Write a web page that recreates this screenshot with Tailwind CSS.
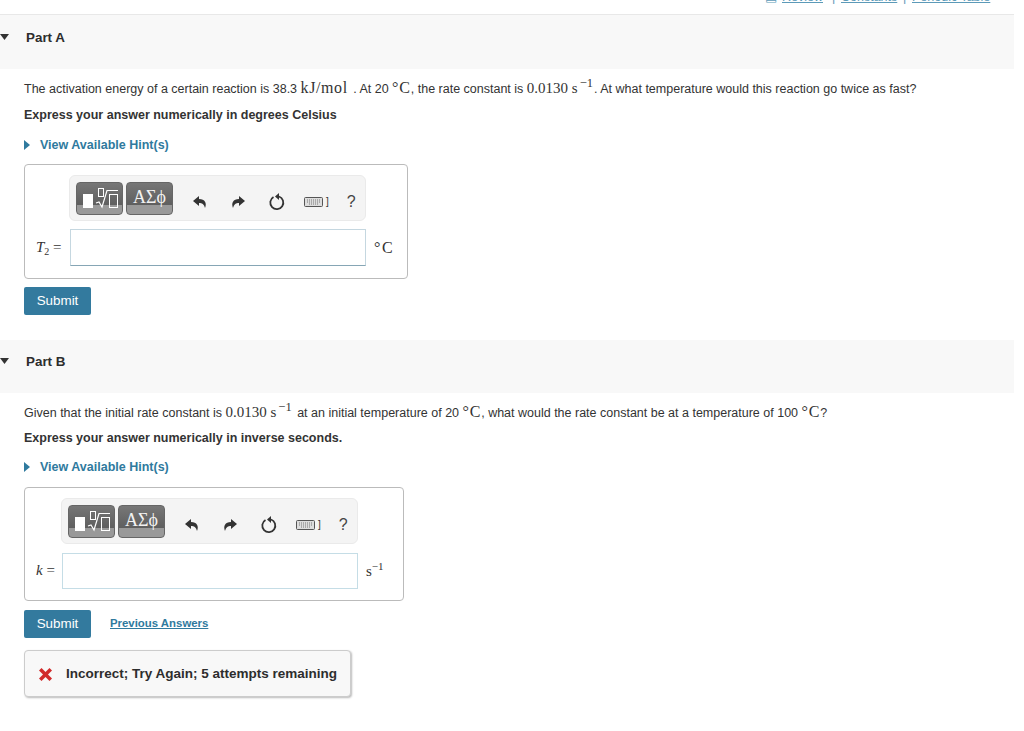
<!DOCTYPE html>
<html lang="en">
<head>
    <meta charset="UTF-8">
    <title>Part A / Part B</title>
    <script src="https://cdn.jsdelivr.net/npm/@tailwindcss/browser@4"></script>
</head>
<body class="bg-white text-[#333] font-['Liberation_Sans',Arial,sans-serif] text-[12.5px] h-[731px] overflow-hidden">
    <div class="w-[1014px]">
        <!-- top links, cut off by the window -->
        <div class="h-[14px] overflow-hidden flex justify-end pr-[24px] text-[12.5px] leading-[14px]">
            <div class="-mt-[10px] flex text-[#5c9ab8]">
                <a class="underline w-[17px]">▤</a>
                <a class="underline w-[44px]">Review</a>
                <span class="w-[15px] text-center">|</span>
                <a class="underline w-[56px]">Constants</a>
                <span class="w-[15px] text-center">|</span>
                <a class="underline w-[78px] whitespace-nowrap">Periodic Table</a>
            </div>
        </div>

        <!-- Part A -->
        <div class="h-[55px] bg-[#f8f8f8] border-t border-[#e8e8e8] flex items-start pt-[15px]">
            <svg class="w-[9px] h-[6px] mt-[4px]" viewBox="0 0 9 6"><path d="M0 0H9L4.5 6Z" fill="#333"/></svg>
            <span class="ml-[17px] font-bold text-[13.4px] leading-[16px] text-[#2d2d2d]">Part A</span>
        </div>
        <div class="pl-[24px]">
            <p class="mt-[10px] h-[18px] leading-[18px] whitespace-nowrap">The activation energy of a certain reaction is 38.3 <span class="font-['Liberation_Serif',serif] text-[16px] tracking-[0.6px] mr-[2px]">kJ/mol</span> . At 20 <span class="font-['Liberation_Serif',serif] text-[16px] tracking-[0.8px]">°C</span>, the rate constant is <span class="font-['Liberation_Serif',serif] text-[15px]">0.0130 s<sup class="text-[12.5px] ml-[2px] mr-[1px]">−1</sup></span>. At what temperature would this reaction go twice as fast?</p>
            <p class="mt-[10px] h-[16px] leading-[16px] font-bold">Express your answer numerically in degrees Celsius</p>
            <div class="mt-[14px] h-[16px] flex items-center gap-[10px] font-bold text-[#2f7a9e]">
                <svg class="w-[6px] h-[10px]" viewBox="0 0 6 10"><path d="M0 0L6 5L0 10Z" fill="#2f7a9e"/></svg>
                <span>View Available Hint(s)</span>
            </div>

            <div class="mt-[11px] w-[384px] h-[115px] border border-[#bbb] rounded-[4px] pt-[10px]">
                <div class="ml-[44px] w-[297px] h-[46px] bg-[#f4f4f4] border border-[#eaeaea] rounded-[6px] flex items-center pl-[6px]">
                    <div class="w-[47px] h-[33px] rounded-[4px] border border-[#666] bg-[linear-gradient(#777,#5f5f5f_70%,#999_70%)]">
                        <svg class="w-[45px] h-[31px]" viewBox="0 0 45 31" fill="none"><rect x="6" y="11" width="10" height="14" fill="#fff"/><rect x="21.5" y="5.5" width="5" height="8" stroke="#fff"/><path d="M19 20L22 19L25 24L30 7.5H41" stroke="#fff" stroke-width="1.2"/><rect x="32.5" y="11.5" width="8" height="13" stroke="#fff"/></svg>
                    </div>
                    <div class="ml-[3px] w-[47px] h-[33px] rounded-[4px] border border-[#666] bg-[linear-gradient(#777,#5f5f5f_70%,#999_70%)] text-[#f2f2f2] font-['Liberation_Serif','DejaVu_Serif',serif] text-[18px] leading-[28px] text-center">ΑΣϕ</div>
                    <div class="ml-[20px] pt-[8px] flex items-center text-[#333]">
                        <svg class="w-[14px] h-[14px]" viewBox="0 0 14 14"><path d="M6 1L0 6L6 11V8C9 8 11 9 12 13C14 8 12 4 6 4Z" fill="#333"/></svg>
                        <svg class="ml-[24px] w-[14px] h-[14px]" viewBox="0 0 14 14"><path d="M8 1L14 6L8 11V8C5 8 3 9 2 13C0 8 2 4 8 4Z" fill="#333"/></svg>
                        <svg class="ml-[23px] w-[18px] h-[18px]" viewBox="0 0 18 18" fill="none"><path d="M11 3.5A6.5 6.5 0 1 1 5.5 4" stroke="#333" stroke-width="1.8"/><path d="M10 0V7L6 3.5Z" fill="#333" transform="translate(1 0)"/></svg>
                        <svg class="ml-[18px] w-[19px] h-[10px]" viewBox="0 0 19 10" fill="none"><rect x="0.5" y="0.5" width="18" height="9" rx="1" fill="#ddd" stroke="#555"/><path d="M3 3H16M3 5H16M5 7H14" stroke="#777" stroke-dasharray="1 1"/></svg>
                        <span class="ml-[3px] text-[10px] leading-[10px]">]</span>
                        <span class="ml-[18px] text-[16px] leading-[16px] text-[#444]">?</span>
                    </div>
                </div>
                <div class="mt-[8px] flex items-center h-[37px]">
                    <span class="w-[45px] pl-[11px] font-['Liberation_Serif',serif] text-[15px] whitespace-nowrap"><i>T</i><sub class="text-[10px]">2</sub> =</span>
                    <div class="w-[296px] h-[37px] bg-white border border-[#c5d7e0] border-b-[#86a6b5]"></div>
                    <span class="ml-[8px] font-['Liberation_Serif',serif] text-[16px] tracking-[1.5px]">°C</span>
                </div>
            </div>

            <button class="mt-[8px] block w-[67px] h-[28px] bg-[#337a9e] rounded-[2px] text-white text-[13.4px]">Submit</button>
        </div>

        <!-- Part B -->
        <div class="mt-[25px] h-[53px] bg-[#f8f8f8] flex items-start pt-[14px]">
            <svg class="w-[9px] h-[6px] mt-[4px]" viewBox="0 0 9 6"><path d="M0 0H9L4.5 6Z" fill="#333"/></svg>
            <span class="ml-[17px] font-bold text-[13.4px] leading-[16px] text-[#2d2d2d]">Part B</span>
        </div>
        <div class="pl-[24px]">
            <p class="mt-[10px] h-[18px] leading-[18px] whitespace-nowrap">Given that the initial rate constant is <span class="font-['Liberation_Serif',serif] text-[15px]">0.0130 s<sup class="text-[12.5px] ml-[2px] mr-[2px]">−1</sup></span> at an initial temperature of 20 <span class="font-['Liberation_Serif',serif] text-[16px] tracking-[0.8px]">°C</span>, what would the rate constant be at a temperature of 100 <span class="font-['Liberation_Serif',serif] text-[16px] tracking-[0.8px]">°C</span>?</p>
            <p class="mt-[9px] h-[16px] leading-[16px] font-bold">Express your answer numerically in inverse seconds.</p>
            <div class="mt-[13px] h-[16px] flex items-center gap-[10px] font-bold text-[#2f7a9e]">
                <svg class="w-[6px] h-[10px]" viewBox="0 0 6 10"><path d="M0 0L6 5L0 10Z" fill="#2f7a9e"/></svg>
                <span>View Available Hint(s)</span>
            </div>

            <div class="mt-[12px] w-[380px] h-[114px] border border-[#bbb] rounded-[4px] pt-[10px]">
                <div class="ml-[36px] w-[297px] h-[46px] bg-[#f4f4f4] border border-[#eaeaea] rounded-[6px] flex items-center pl-[6px]">
                    <div class="w-[47px] h-[33px] rounded-[4px] border border-[#666] bg-[linear-gradient(#777,#5f5f5f_70%,#999_70%)]">
                        <svg class="w-[45px] h-[31px]" viewBox="0 0 45 31" fill="none"><rect x="6" y="11" width="10" height="14" fill="#fff"/><rect x="21.5" y="5.5" width="5" height="8" stroke="#fff"/><path d="M19 20L22 19L25 24L30 7.5H41" stroke="#fff" stroke-width="1.2"/><rect x="32.5" y="11.5" width="8" height="13" stroke="#fff"/></svg>
                    </div>
                    <div class="ml-[3px] w-[47px] h-[33px] rounded-[4px] border border-[#666] bg-[linear-gradient(#777,#5f5f5f_70%,#999_70%)] text-[#f2f2f2] font-['Liberation_Serif','DejaVu_Serif',serif] text-[18px] leading-[28px] text-center">ΑΣϕ</div>
                    <div class="ml-[20px] pt-[8px] flex items-center text-[#333]">
                        <svg class="w-[14px] h-[14px]" viewBox="0 0 14 14"><path d="M6 1L0 6L6 11V8C9 8 11 9 12 13C14 8 12 4 6 4Z" fill="#333"/></svg>
                        <svg class="ml-[24px] w-[14px] h-[14px]" viewBox="0 0 14 14"><path d="M8 1L14 6L8 11V8C5 8 3 9 2 13C0 8 2 4 8 4Z" fill="#333"/></svg>
                        <svg class="ml-[23px] w-[18px] h-[18px]" viewBox="0 0 18 18" fill="none"><path d="M11 3.5A6.5 6.5 0 1 1 5.5 4" stroke="#333" stroke-width="1.8"/><path d="M10 0V7L6 3.5Z" fill="#333" transform="translate(1 0)"/></svg>
                        <svg class="ml-[18px] w-[19px] h-[10px]" viewBox="0 0 19 10" fill="none"><rect x="0.5" y="0.5" width="18" height="9" rx="1" fill="#ddd" stroke="#555"/><path d="M3 3H16M3 5H16M5 7H14" stroke="#777" stroke-dasharray="1 1"/></svg>
                        <span class="ml-[3px] text-[10px] leading-[10px]">]</span>
                        <span class="ml-[18px] text-[16px] leading-[16px] text-[#444]">?</span>
                    </div>
                </div>
                <div class="mt-[9px] flex items-center h-[36px]">
                    <span class="w-[37px] pl-[11px] mb-[2px] font-['Liberation_Serif',serif] text-[15px] whitespace-nowrap"><i>k</i> =</span>
                    <div class="w-[296px] h-[36px] bg-white border border-[#c5dde6]"></div>
                    <span class="ml-[8px] font-['Liberation_Serif',serif] text-[15px]">s<sup class="text-[11px]">−1</sup></span>
                </div>
            </div>

            <div class="mt-[9px] flex items-center">
                <button class="w-[67px] h-[28px] bg-[#337a9e] rounded-[2px] text-white text-[13.4px]">Submit</button>
                <a class="ml-[19px] underline font-bold text-[11.4px] text-[#2f7a9e]">Previous Answers</a>
            </div>

            <div class="mt-[12px] w-[327px] h-[47px] bg-[#f8f8f8] border border-[#ccc] rounded-[4px] shadow-[1px_1px_2px_#bbb] flex items-center pl-[13px] pt-[2px]">
                <svg class="w-[15px] h-[15px]" viewBox="0 0 15 15"><path d="M1 3.5L3.5 1L7.5 5L11.5 1L14 3.5L10 7.5L14 11.5L11.5 14L7.5 10L3.5 14L1 11.5L5 7.5Z" fill="#d12a2a"/></svg>
                <span class="ml-[13px] font-bold text-[13.5px] text-[#2d2d2d] whitespace-nowrap">Incorrect; Try Again; 5 attempts remaining</span>
            </div>
        </div>
    </div>
</body>
</html>
